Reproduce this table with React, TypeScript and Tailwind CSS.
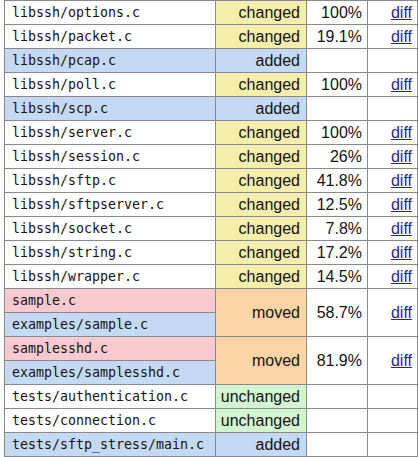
type Row = {
  file: string;
  fileBg?: string;
  status?: string;
  pct?: string;
  diff?: boolean;
  span?: number;
  skip?: boolean;
};

const statusBg: Record<string, string> = {
  changed: 'bg-[#f3efaa]',
  added: 'bg-[#c4daf4]',
  moved: 'bg-[#fad4a4]',
  unchanged: 'bg-[#d2f5cf]',
};

const rows: Row[] = [
  { file: 'libssh/options.c', status: 'changed', pct: '100%', diff: true },
  { file: 'libssh/packet.c', status: 'changed', pct: '19.1%', diff: true },
  { file: 'libssh/pcap.c', fileBg: 'bg-[#c4daf4]', status: 'added' },
  { file: 'libssh/poll.c', status: 'changed', pct: '100%', diff: true },
  { file: 'libssh/scp.c', fileBg: 'bg-[#c4daf4]', status: 'added' },
  { file: 'libssh/server.c', status: 'changed', pct: '100%', diff: true },
  { file: 'libssh/session.c', status: 'changed', pct: '26%', diff: true },
  { file: 'libssh/sftp.c', status: 'changed', pct: '41.8%', diff: true },
  { file: 'libssh/sftpserver.c', status: 'changed', pct: '12.5%', diff: true },
  { file: 'libssh/socket.c', status: 'changed', pct: '7.8%', diff: true },
  { file: 'libssh/string.c', status: 'changed', pct: '17.2%', diff: true },
  { file: 'libssh/wrapper.c', status: 'changed', pct: '14.5%', diff: true },
  { file: 'sample.c', fileBg: 'bg-[#f8cad0]', status: 'moved', pct: '58.7%', diff: true, span: 2 },
  { file: 'examples/sample.c', fileBg: 'bg-[#c4daf4]', skip: true },
  { file: 'samplesshd.c', fileBg: 'bg-[#f8cad0]', status: 'moved', pct: '81.9%', diff: true, span: 2 },
  { file: 'examples/samplesshd.c', fileBg: 'bg-[#c4daf4]', skip: true },
  { file: 'tests/authentication.c', status: 'unchanged' },
  { file: 'tests/connection.c', status: 'unchanged' },
  { file: 'tests/sftp_stress/main.c', fileBg: 'bg-[#c4daf4]', status: 'added' },
];

const cell = 'border border-[#8a8a8a] h-[24px] p-0 align-middle leading-[22px]';

export default function App() {
  return (
    <div className="bg-white w-[418px] h-[457px] overflow-hidden pl-1">
      <table className="border-collapse text-[#141414]">
        <tbody>
          {rows.map((r) => (
            <tr key={r.file}>
              <td
                className={`${cell} w-[211px] pl-[7px] text-[13.3px] font-['DejaVu_Sans_Mono',monospace] ${r.fileBg ?? 'bg-white'}`}
              >
                {r.file}
              </td>
              {!r.skip && (
                <>
                  <td
                    rowSpan={r.span ?? 1}
                    className={`${cell} w-[91px] pr-[6px] text-right text-[16px] font-['Liberation_Sans',Arial,sans-serif] ${statusBg[r.status ?? 'changed']}`}
                  >
                    {r.status}
                  </td>
                  <td
                    rowSpan={r.span ?? 1}
                    className={`${cell} w-[61px] pr-[5px] text-right text-[16px] font-['Liberation_Sans',Arial,sans-serif] bg-white`}
                  >
                    {r.pct}
                  </td>
                  <td
                    rowSpan={r.span ?? 1}
                    className={`${cell} w-[50px] pr-[5px] text-right text-[16px] font-['Liberation_Sans',Arial,sans-serif] bg-white`}
                  >
                    {r.diff && (
                      <a href="#" className="text-[#23239c] underline">
                        diff
                      </a>
                    )}
                  </td>
                </>
              )}
            </tr>
          ))}
        </tbody>
      </table>
    </div>
  );
}
